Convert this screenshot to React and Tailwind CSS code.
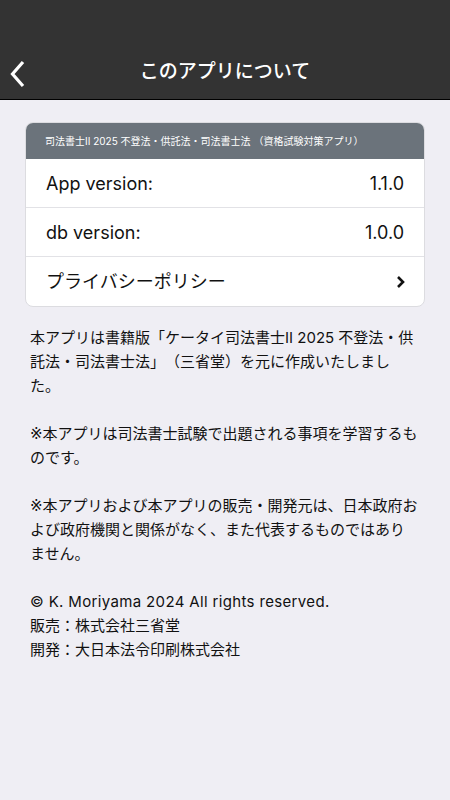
import React from "react";

const font = {
    fontFamily: 'Inter, "Noto Sans CJK JP", "Noto Sans", sans-serif',
};

// ※ を幅の狭いグリフにするため DejaVu を先に指定（本文は CJK にフォールバック）
const noteFont = {
    fontFamily: '"DejaVu Sans", "Noto Sans CJK JP", sans-serif',
};

function Row({ label, value, chevron, last }) {
    return (
        <div
            className={`flex items-center justify-between px-5 h-[49px] ${
                last ? "" : "border-b border-[#e2e2e6]"
            }`}
        >
            <span className="text-[18px] text-[#111]">{label}</span>
            {value && <span className="text-[18px] text-[#111]">{value}</span>}
            {chevron && (
                <svg width="10" height="14" viewBox="0 0 10 14" className="-mr-[2px]">
                    <path
                        d="M2 2 L7 7 L2 12"
                        fill="none"
                        stroke="#111"
                        strokeWidth="2.6"
                    />
                </svg>
            )}
        </div>
    );
}

export default function App() {
    return (
        <div
            className="w-[450px] h-[800px] bg-[#efeef4] flex flex-col [text-spacing-trim:space-all]"
            style={font}
        >
            {/* ヘッダー */}
            <div className="bg-[#333333] h-[100px] flex flex-col border-b border-black">
                <div className="h-[46px]" />
                <div className="relative flex-1 flex items-center justify-center">
                    <svg
                        width="20"
                        height="30"
                        viewBox="0 0 20 30"
                        className="absolute left-[8px] top-[14px]"
                    >
                        <path
                            d="M15 2 L4.5 14 L15 26"
                            fill="none"
                            stroke="#fff"
                            strokeWidth="3.2"
                        />
                    </svg>
                    <h1 className="text-white text-[19px] font-medium -mt-[1px]">
                        このアプリについて
                    </h1>
                </div>
            </div>

            {/* 情報カード */}
            <div className="mx-[25px] mt-[22px] bg-white rounded-[8px] overflow-hidden border border-[#dcdce0]">
                <div className="bg-[#6b737b] h-[36px] flex items-center px-[19px]">
                    <span className="text-white text-[10px]">
                        司法書士II 2025 不登法・供託法・司法書士法 （資格試験対策アプリ）
                    </span>
                </div>
                <Row label="App version:" value="1.1.0" />
                <Row label="db version:" value="1.0.0" />
                <Row label="プライバシーポリシー" chevron last />
            </div>

            {/* 説明文 */}
            <div className="pl-[30px] pr-[31px] mt-[19px] text-[15px] leading-[24px] text-[#111]">
                <p>
                    本アプリは書籍版「ケータイ司法書士II 2025 不登法・供託法・司法書士法」（三省堂）を元に作成いたしました。
                </p>
                <p className="mt-[24px]" style={noteFont}>
                    ※本アプリは司法書士試験で出題される事項を学習するものです。
                </p>
                <p className="mt-[24px]" style={noteFont}>
                    ※本アプリおよび本アプリの販売・開発元は、日本政府および政府機関と関係がなく、また代表するものではありません。
                </p>
                <p className="mt-[24px] tracking-[0.35px]">
                    © K. Moriyama 2024 All rights reserved.
                </p>
                <p>販売：株式会社三省堂</p>
                <p>開発：大日本法令印刷株式会社</p>
            </div>
        </div>
    );
}
